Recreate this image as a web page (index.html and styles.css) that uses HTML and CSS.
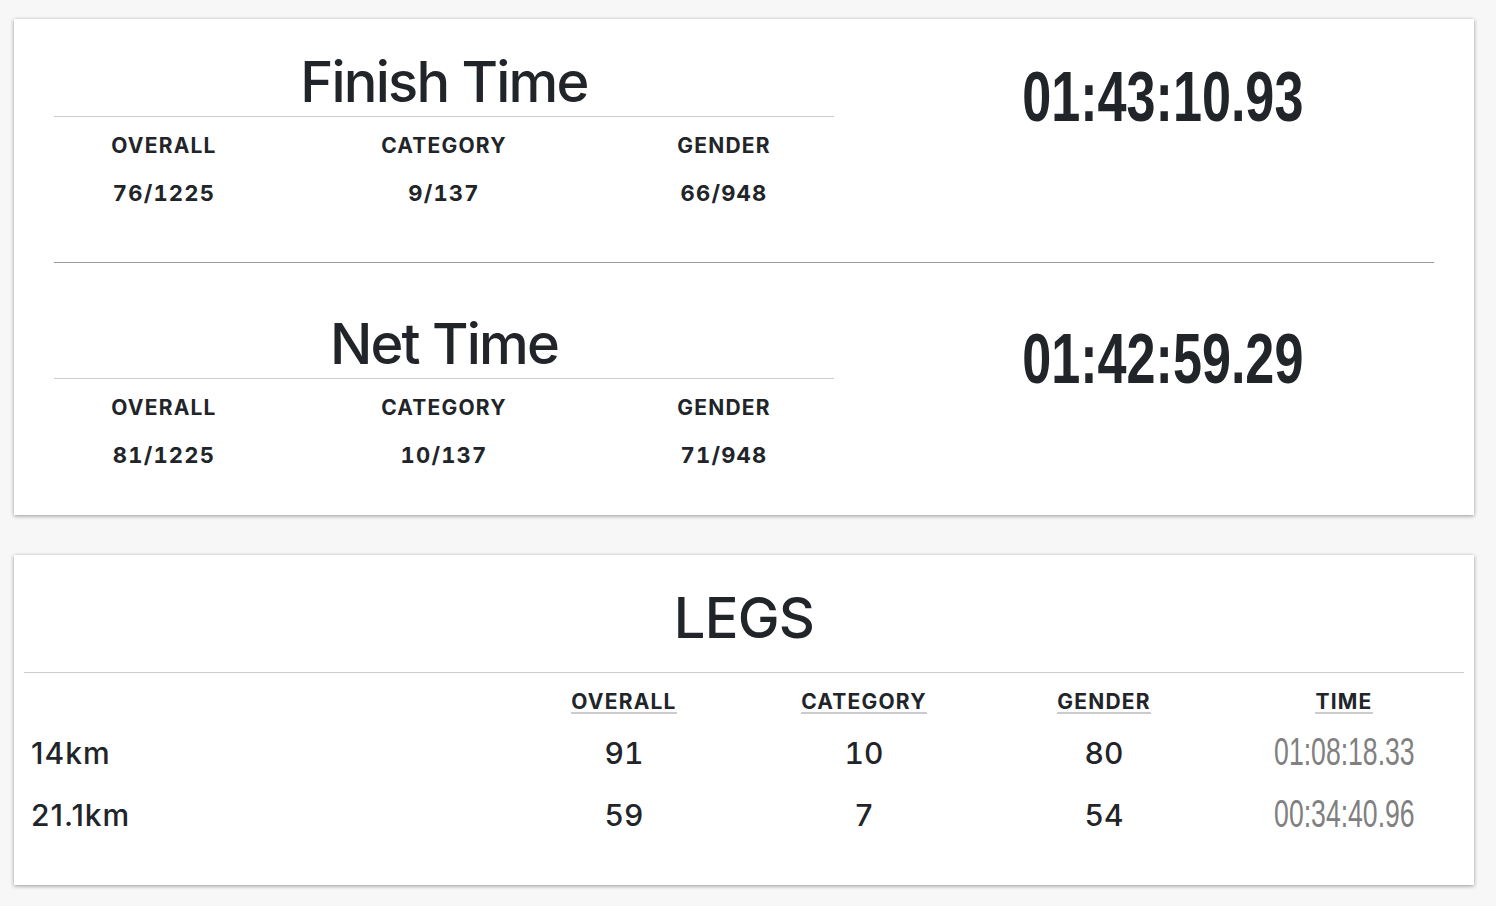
FILE: index.html
```html
<!DOCTYPE html>
<html>
<head>
    <title>Race Result</title>
    <link rel="stylesheet" href="styles.css">
</head>
<body>
    <div class="page">
        <section class="card results">
            <div class="result-row">
                <div class="result-main">
                    <h2 class="result-title">Finish Time</h2>
                    <div class="placings">
                        <div class="placing">
                            <div class="placing-label">OVERALL</div>
                            <div class="placing-value">76/1225</div>
                        </div>
                        <div class="placing">
                            <div class="placing-label">CATEGORY</div>
                            <div class="placing-value">9/137</div>
                        </div>
                        <div class="placing">
                            <div class="placing-label">GENDER</div>
                            <div class="placing-value">66/948</div>
                        </div>
                    </div>
                </div>
                <div class="result-time"><span class="clock">01:43:10.93</span></div>
            </div>

            <div class="result-row">
                <div class="result-main">
                    <h2 class="result-title">Net Time</h2>
                    <div class="placings">
                        <div class="placing">
                            <div class="placing-label">OVERALL</div>
                            <div class="placing-value">81/1225</div>
                        </div>
                        <div class="placing">
                            <div class="placing-label">CATEGORY</div>
                            <div class="placing-value">10/137</div>
                        </div>
                        <div class="placing">
                            <div class="placing-label">GENDER</div>
                            <div class="placing-value">71/948</div>
                        </div>
                    </div>
                </div>
                <div class="result-time"><span class="clock">01:42:59.29</span></div>
            </div>
        </section>

        <section class="card legs">
            <h2 class="legs-title">LEGS</h2>
            <table class="legs-table">
                <colgroup>
                    <col class="col-name">
                    <col><col><col><col>
                </colgroup>
                <thead>
                    <tr>
                        <th></th>
                        <th><span class="th-label">OVERALL</span></th>
                        <th><span class="th-label">CATEGORY</span></th>
                        <th><span class="th-label">GENDER</span></th>
                        <th><span class="th-label">TIME</span></th>
                    </tr>
                </thead>
                <tbody>
                    <tr>
                        <td class="leg-name">14km</td>
                        <td>91</td>
                        <td>10</td>
                        <td>80</td>
                        <td><span class="leg-time">01:08:18.33</span></td>
                    </tr>
                    <tr>
                        <td class="leg-name">21.1km</td>
                        <td>59</td>
                        <td>7</td>
                        <td>54</td>
                        <td><span class="leg-time">00:34:40.96</span></td>
                    </tr>
                </tbody>
            </table>
        </section>
    </div>
</body>
</html>
```

FILE: styles.css
```css
html, body {
    margin: 0;
    padding: 0;
}

body {
    background-color: #f7f7f7;
    font-family: Inter, "Noto Sans", sans-serif;
    color: #212529;
    font-variant-numeric: tabular-nums;
}

.page {
    width: 1460px;
    padding: 19px 0 20px 14px;
}

.card {
    background-color: #fff;
    box-shadow: 0 1px 4px rgba(0, 0, 0, 0.4);
}

.card + .card {
    margin-top: 40px;
}

/* finish / net time card */
.results {
    padding: 30px 40px 30px 40px;
}

.result-row {
    display: grid;
    grid-template-columns: 780px 1fr;
    padding-bottom: 55px;
    border-bottom: 1px solid #999;
}

.result-row + .result-row {
    margin-top: 48px;
    padding-bottom: 16px;
    border-bottom: none;
}

.result-title {
    margin: 0;
    font-size: 56px;
    font-weight: 500;
    line-height: 67px;
    letter-spacing: -1.8px;
    text-align: center;
    border-bottom: 1px solid #ccc;
}

.placings {
    display: grid;
    grid-template-columns: repeat(3, 280px);
    margin: 0 -30px;
    padding-top: 15px;
    text-align: center;
}

.placing-label {
    font-size: 21px;
    font-weight: 700;
    line-height: 28px;
    letter-spacing: 1.2px;
}

.placing-value {
    margin-top: 19px;
    font-size: 22px;
    font-weight: 700;
    line-height: 28px;
    letter-spacing: 1.2px;
}

.result-time {
    padding-left: 58px;
    padding-top: 13px;
    text-align: center;
}

.clock {
    display: inline-block;
    font-family: "Liberation Sans", Arial, sans-serif;
    font-size: 70px;
    font-weight: 700;
    line-height: 70px;
    transform: scaleX(0.745);
}

/* legs card */
.legs {
    padding: 30px 10px 39px 10px;
}

.legs-title {
    margin: 0;
    padding-bottom: 20px;
    font-size: 56px;
    font-weight: 500;
    line-height: 67px;
    letter-spacing: -0.8px;
    text-align: center;
    border-bottom: 1px solid #ccc;
}

.legs-table {
    width: 100%;
    table-layout: fixed;
    border-collapse: collapse;
}

.col-name {
    width: 480px;
}

.legs-table th {
    padding: 19px 0 8px 0;
    text-align: center;
}

.th-label {
    display: inline-block;
    font-size: 21px;
    font-weight: 700;
    line-height: 20px;
    letter-spacing: 1.2px;
    border-bottom: 2px solid #ccc;
}

.legs-table td {
    height: 62px;
    padding: 0;
    font-size: 30px;
    font-weight: 500;
    line-height: 36px;
    vertical-align: middle;
    text-align: center;
}

.legs-table td.leg-name {
    padding-left: 7px;
    font-variant-numeric: normal;
    letter-spacing: 1px;
    text-align: left;
}

.leg-time {
    display: inline-block;
    font-family: "Liberation Sans", Arial, sans-serif;
    font-size: 38px;
    font-weight: 400;
    line-height: 36px;
    color: #808080;
    transform: scaleX(0.7);
}
```
